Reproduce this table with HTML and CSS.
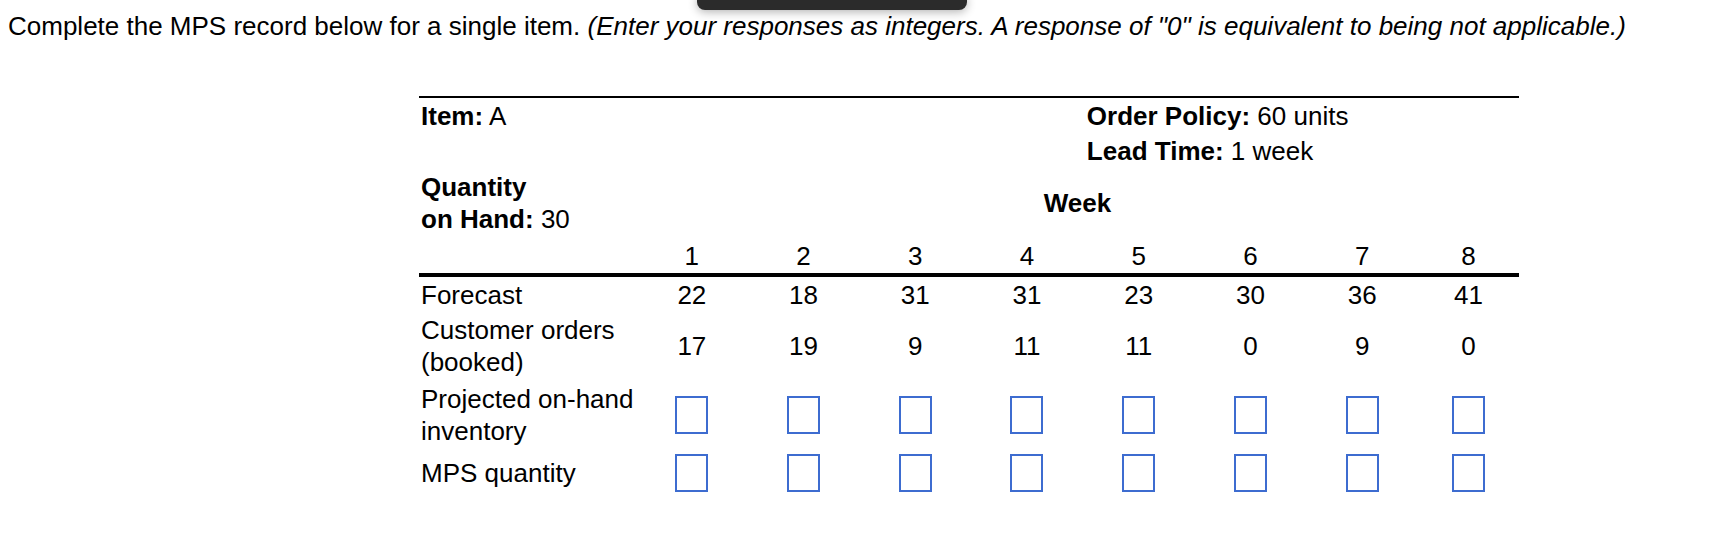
FILE: index.html
```html
<!DOCTYPE html>
<html>
<head>
<meta charset="utf-8">
<link rel="stylesheet" href="styles.css">
</head>
<body>
<div class="toolbar"></div>
<p class="intro">Complete the MPS record below for a single item. <em>(Enter your responses as integers. A response of "0" is equivalent to being not applicable.)</em></p>
<div class="mps">
  <div class="c item"><span><b>Item:</b> A</span></div>
  <div class="c policy"><span><b>Order Policy:</b> 60 units</span></div>
  <div class="c lead"><span><b>Lead Time:</b> 1 week</span></div>
  <div class="c qoh"><span><b>Quantity</b><br><b>on Hand:</b> 30</span></div>
  <div class="c week"><b>Week</b></div>

  <div class="row r4">
    <div class="c wk lbl"></div>
    <div class="c wk num">1</div>
    <div class="c wk num">2</div>
    <div class="c wk num">3</div>
    <div class="c wk num">4</div>
    <div class="c wk num">5</div>
    <div class="c wk num">6</div>
    <div class="c wk num">7</div>
    <div class="c wk num">8</div>
  </div>

  <div class="row r5">
    <div class="c lbl">Forecast</div>
    <div class="c num">22</div>
    <div class="c num">18</div>
    <div class="c num">31</div>
    <div class="c num">31</div>
    <div class="c num">23</div>
    <div class="c num">30</div>
    <div class="c num">36</div>
    <div class="c num">41</div>
  </div>

  <div class="row r6">
    <div class="c lbl">Customer orders<br>(booked)</div>
    <div class="c num">17</div>
    <div class="c num">19</div>
    <div class="c num">9</div>
    <div class="c num">11</div>
    <div class="c num">11</div>
    <div class="c num">0</div>
    <div class="c num">9</div>
    <div class="c num">0</div>
  </div>

  <div class="row r7">
    <div class="c lbl">Projected on-hand<br>inventory</div>
    <div class="c num"><input class="ans" type="text"></div>
    <div class="c num"><input class="ans" type="text"></div>
    <div class="c num"><input class="ans" type="text"></div>
    <div class="c num"><input class="ans" type="text"></div>
    <div class="c num"><input class="ans" type="text"></div>
    <div class="c num"><input class="ans" type="text"></div>
    <div class="c num"><input class="ans" type="text"></div>
    <div class="c num"><input class="ans" type="text"></div>
  </div>

  <div class="row r8">
    <div class="c lbl">MPS quantity</div>
    <div class="c num"><input class="ans" type="text"></div>
    <div class="c num"><input class="ans" type="text"></div>
    <div class="c num"><input class="ans" type="text"></div>
    <div class="c num"><input class="ans" type="text"></div>
    <div class="c num"><input class="ans" type="text"></div>
    <div class="c num"><input class="ans" type="text"></div>
    <div class="c num"><input class="ans" type="text"></div>
    <div class="c num"><input class="ans" type="text"></div>
  </div>
</div>
</body>
</html>
```
FILE: styles.css
```css
html, body {
  margin: 0;
  padding: 0;
  background: #ffffff;
}
body {
  font-family: "Liberation Sans", Arial, sans-serif;
  font-size: 26px;
  color: #000;
  position: relative;
}
.toolbar {
  position: absolute;
  left: 697px;
  top: -8px;
  width: 270px;
  height: 18px;
  background: #2b2b2b;
  border-radius: 8px;
  box-shadow: 0 2px 10px rgba(0, 0, 0, 0.3);
}
.intro {
  margin: 0;
  padding: 11px 0 0 8px;
  line-height: 30px;
  white-space: nowrap;
}
.intro em {
  font-style: italic;
}
.mps {
  margin: 55px 0 0 419px;
  width: 1100px;
  border-top: 2px solid #000;
  display: grid;
  grid-template-columns: 217px repeat(7, 1fr) 101px;
  grid-template-rows: 36px 34px 70px 39px 36px 66px 71px 45px;
  line-height: 32px;
}
.row {
  display: contents;
}
.r4 > .c { grid-row: 4; }
.r5 > .c { grid-row: 5; }
.r6 > .c { grid-row: 6; }
.r7 > .c { grid-row: 7; }
.r8 > .c { grid-row: 8; }
.c {
  display: flex;
  align-items: center;
}
.item {
  grid-column: 1 / 6;
  grid-row: 1;
  padding-left: 2px;
}
.policy {
  grid-column: 6 / 10;
  grid-row: 1;
  padding-left: 4px;
}
.lead {
  grid-column: 6 / 10;
  grid-row: 2;
  padding-left: 4px;
}
.qoh {
  grid-column: 1;
  grid-row: 3;
  padding-left: 2px;
}
.week {
  grid-column: 2 / 10;
  grid-row: 3;
  justify-content: center;
}
.wk {
  border-bottom: 4px solid #000;
}
.lbl {
  padding-left: 2px;
}
.num {
  justify-content: center;
}
.ans {
  width: 33px;
  height: 38px;
  box-sizing: border-box;
  border: 2px solid #3d6cd0;
  border-radius: 0;
  margin: 0;
  padding: 0;
  background: #fff;
  outline: none;
}
```
